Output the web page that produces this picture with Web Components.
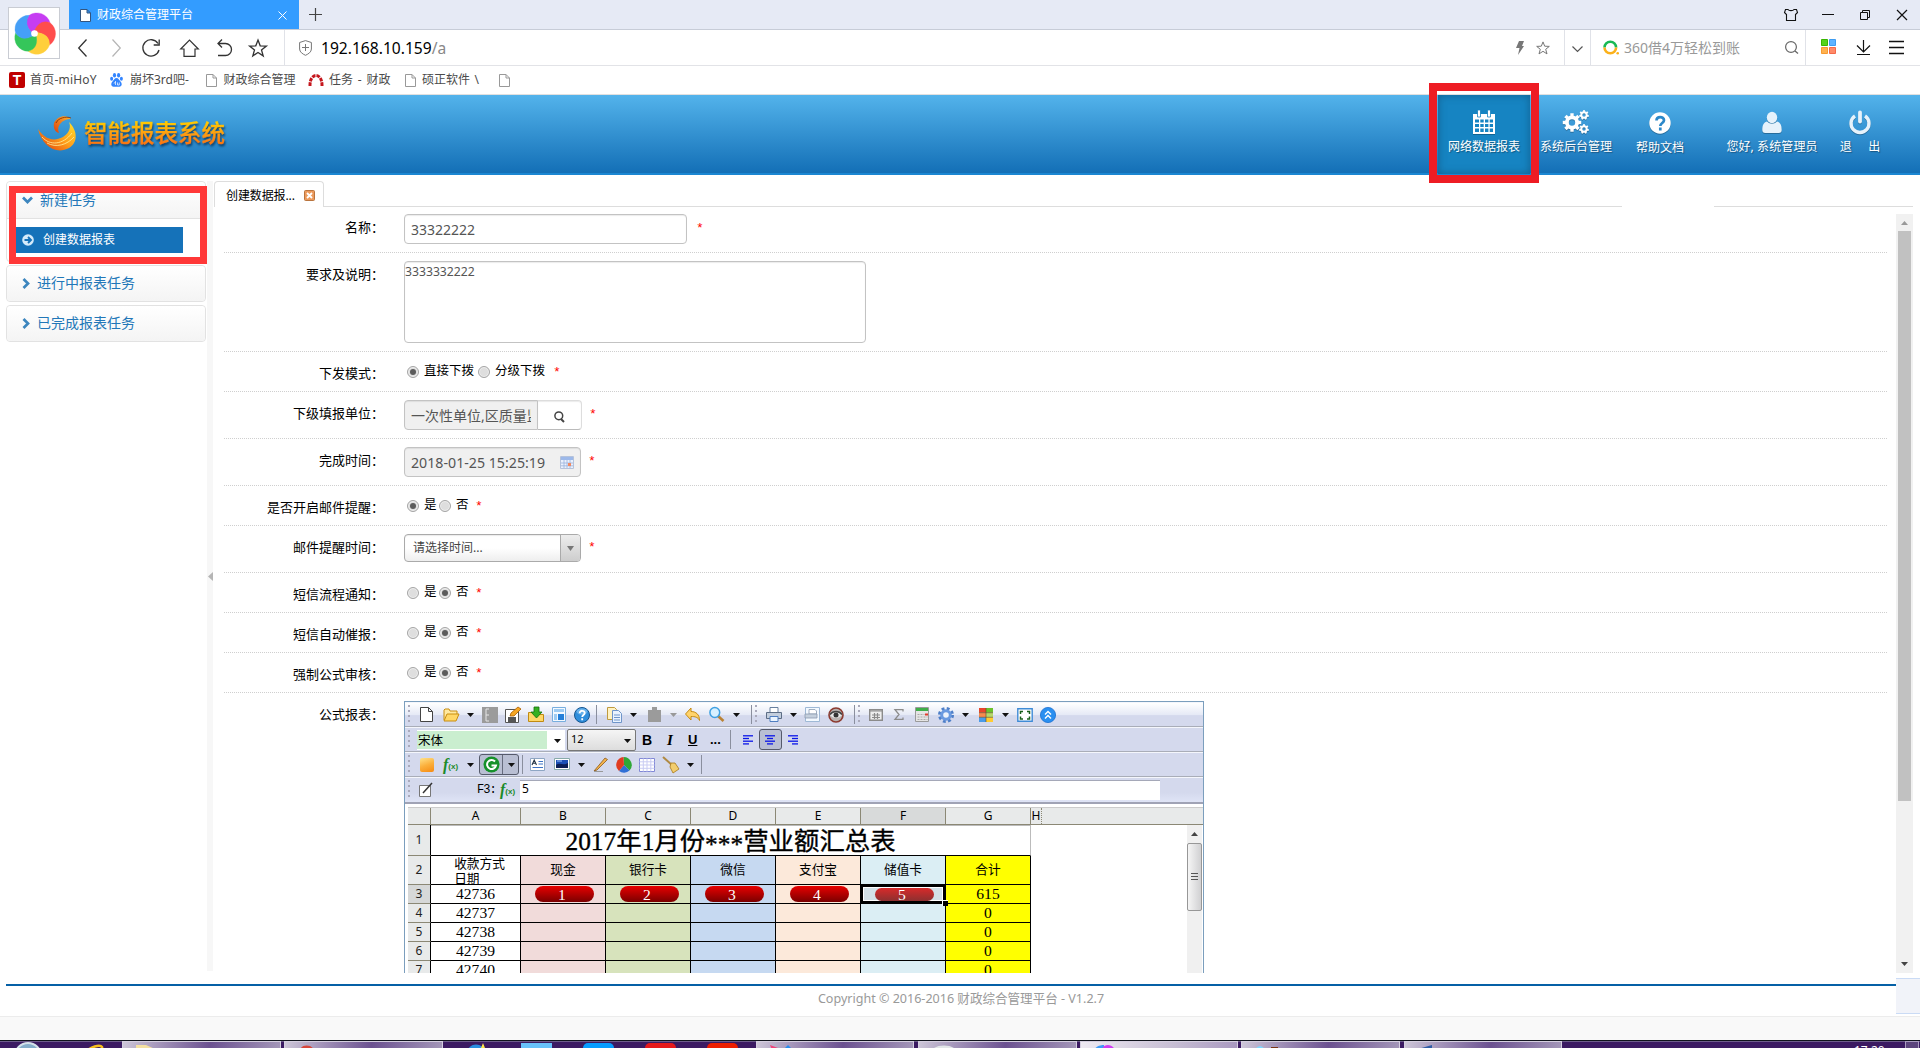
<!DOCTYPE html>
<html lang="zh-CN">
<head>
<meta charset="utf-8">
<title>财政综合管理平台</title>
<style>
html,body{margin:0;padding:0;background:#fff}
body{width:1920px;height:1048px;overflow:hidden;font-family:"Noto Sans","Noto Sans CJK SC",sans-serif;font-size:12px;line-height:16px;color:#333}
</style>
</head>
<body>
<report-app></report-app>
<script>
/* Lays items out in a flex row; x is the left edge of each item, y nudges it vertically. */
function place(origin, items) {
  let end = origin;
  return items.map(([x, w, html, y = 0, cls = '']) => {
    const m = x - end; end = x + w;
    return `<span class="it ${cls}" style="margin-left:${m}px;width:${w}px;${y ? `margin-top:${y * 2}px` : ''}">${html}</span>`;
  }).join('');
}
const BASE = `*{box-sizing:border-box}.it{flex:none;display:flex;align-items:center;white-space:nowrap}svg{display:block;flex:none;overflow:visible}.row{display:flex;align-items:center}`;
const svg = (w, h, body, a = '') => `<svg width="${w}" height="${h}" viewBox="0 0 ${w} ${h}" fill="none" ${a}>${body}</svg>`;
function define(name, html) {
  customElements.define(name, class extends HTMLElement {
    constructor() {
      super();
      this.attachShadow({ mode: 'open' }).innerHTML = typeof html === 'function' ? html(this) : html;
    }
  });
}
const doc = (c, f = '#fff') => svg(11, 13, `<path d="M.5.5h6.5l3.5 3.5v8.500H.5zM7 .5V4h3.500" stroke="${c}" fill="${f}"/>`);
const caret = (c = '#111') => svg(7, 4, `<path d="M0 0h7L3.500 4z" fill="${c}"/>`);
const swirl = (s) => {
  const cols = ['#c63df2', '#ff4d4d', '#ffcf3b', '#35c65a', '#459ff7'];
  return `<svg width="${s}" height="${s}" viewBox="-20 -20 40 40">` + cols.map((c, i) =>
    `<path d="M0 -3Q6 -14 16 -11A14 14 0 0 0 -5.500 -18.600Q-12.500 -10 -2.900 -.9Z" fill="${c}" stroke="${c}" stroke-width=".3" transform="rotate(${i * 72})"/>`).join('') +
    `<circle r="3.400" fill="#fff"/></svg>`;
};

/* ---------- browser window ---------- */
define('browser-chrome', () => `<style>${BASE}
:host{display:block;height:95px;position:relative}
.tabs{height:30px;background:#e6eaf5;border-bottom:1px solid #c7ccd7}
.tab{background:#339cff;height:29px;align-self:flex-start;color:#fff;padding-top:1px}
.addr{height:36px;border-bottom:1px solid #e2e3e7}
.marks{height:29px;border-bottom:1px solid #e0e0e0;color:#4b4b4b}
.v{height:35px;background:#e0e2e8}
.logo{position:absolute;left:8px;top:7px;width:52px;height:52px;background:#fff;border:1px solid #c9ccd3;display:flex;align-items:center;justify-content:center}
</style>
<div class="row tabs">${place(0, [
  [69, 230, `<span class="row" style="height:28px">${place(69, [[80, 11, doc('#33557f')], [97, 170, '<span style="font-size:12px">财政综合管理平台</span>'], [278, 9, svg(9, 9, '<path d="M.5.5l8 8M8.500.5l-8 8" stroke="#fff"/>')]])}</span>`, 0, 'tab'],
  [309, 13, svg(13, 13, '<path d="M6.500 0v13M0 6.500h13" stroke="#444" stroke-width="1.200"/>')],
  [1784, 14, svg(14, 12, '<path d="M4 .5C5 2 9 2 10 .5h2.500l1 3-2 2v6h-9v-6l-2-2 1-3z" stroke="#111" stroke-width="1.100"/>')],
  [1822, 12, svg(12, 2, '<path d="M0 .5h12" stroke="#111"/>')],
  [1860, 10, svg(10, 10, '<path d="M.5 2.500h7v7h-7zM2.500 2.500v-2h7v7h-2" stroke="#111"/>')],
  [1897, 10, svg(10, 10, '<path d="M0 0l10 10M10 0L0 10" stroke="#111" stroke-width="1.200"/>')]
])}</div>
<div class="row addr">${place(0, [
  [78, 9, svg(9, 18, '<path d="M8.500.5L.7 9l7.800 8.500" stroke="#333" stroke-width="1.300"/>')],
  [112, 9, svg(9, 18, '<path d="M.5.5L8.300 9 .5 17.500" stroke="#b5b5b5" stroke-width="1.200"/>')],
  [142, 18, svg(18, 18, '<path d="M16 4.500A8.200 8.200 0 1 0 17 11M17.200.5v5.500h-5.500" stroke="#333" stroke-width="1.300"/>')],
  [180, 19, svg(19, 18, '<path d="M.7 10L9.500 1l8.800 9H15v7.300H4V10z" stroke="#333" stroke-width="1.200"/>')],
  [217, 15, svg(15, 17, '<path d="M5 .5L1 4.500l4 4M1 4.500h7.500a6 6 0 0 1 0 12H1" stroke="#333" stroke-width="1.300"/>')],
  [249, 18, svg(18, 18, '<path d="M9 1l2.200 5.800 6.200.3-4.900 3.800 1.700 6L9 13.500l-5.200 3.400 1.700-6L.6 7.100l6.200-.3z" stroke="#333" stroke-width="1.300"/>')],
  [284, 1, '', 0, 'v'],
  [299, 13, svg(13, 16, '<path d="M6.500.6L12.400 2.500v6.500c0 3-3 5-5.900 6.300C3.600 14 .6 12 .6 9V2.500zM6.500 4v7M3 7.500h7" stroke="#777"/>')],
  [321, 135, '<span style="font-size:15.600px;color:#000">192.168.10.159<span style="color:#888">/a</span></span>'],
  [1516, 8, svg(8, 14, '<path d="M3 0h5L6 5h2L2 14l1.500-7H0z" fill="#777"/>')],
  [1536, 14, svg(14, 14, '<path d="M7 .9l1.700 4.300 4.600.2-3.600 2.900 1.300 4.600L7 10.300l-4 2.600 1.300-4.600L.7 5.400l4.600-.2z" stroke="#777"/>')],
  [1564, 1, '', 0, 'v'],
  [1572, 11, svg(11, 6, '<path d="M.5.5l5 5 5-5" stroke="#555" stroke-width="1.200"/>', 'style="margin-top:2px"')],
  [1590, 1, '', 0, 'v'],
  [1603, 16, svg(16, 15, '<path d="M1.500 7.500a5.800 5.800 0 0 1 11.600 0" stroke="#19b955" stroke-width="2.600"/><path d="M1.500 7.500a5.800 5.800 0 0 0 11.600 0" stroke="#fbb11b" stroke-width="2.600"/><circle cx="14.700" cy="13.200" r="1.300" fill="#fbb11b"/>')],
  [1624, 130, '<span style="font-size:14px;color:#999">360借4万轻松到账</span>'],
  [1785, 14, svg(14, 13, '<circle cx="6" cy="6" r="5.400" stroke="#666" stroke-width="1.200"/><path d="M10 10l3 2.500" stroke="#666" stroke-width="1.300"/>')],
  [1805, 1, '', 0, 'v'],
  [1821, 15, svg(15, 15, '<path d="M.5.5h6v6h-6z" fill="#54d31a" stroke="#38b400"/><path d="M8.500.5h6v6h-6z" fill="#5eb3ff" stroke="#3e9cf0"/><path d="M.5 8.500h6v6h-6z" fill="#ffb14f" stroke="#f79a2f"/><path d="M8.500 8.500h6v6h-6z" fill="#ff8a68" stroke="#f4694a"/>'), -1],
  [1856, 15, svg(15, 15, '<path d="M7.500 0v12M1 5.500l6.500 6.500L14 5.500M1 14.500h13" stroke="#111" stroke-width="1.200"/>')],
  [1889, 15, svg(15, 13, '<path d="M0 .5h15M0 6.500h15M0 12.500h15" stroke="#111" stroke-width="1.300"/>')]
])}</div>
<div class="row marks">${place(0, [
  [9, 16, '<b style="width:16px;height:16px;background:#c00000;border-radius:2px;color:#fff;font:bold 14px/16px Liberation Sans;text-align:center">T</b>'],
  [30, 75, '<span style="letter-spacing:.2px">首页-miHoY</span>'],
  [110, 13, svg(13, 14, '<g fill="#3385ff"><ellipse cx="4.500" cy="2.200" rx="1.600" ry="2.200"/><ellipse cx="8.600" cy="2.200" rx="1.600" ry="2.200"/><ellipse cx="1.600" cy="5.800" rx="1.500" ry="2"/><ellipse cx="11.400" cy="5.800" rx="1.500" ry="2"/><path d="M6.500 5c2 0 2.500 2 4 3.500 2 2 1.500 5-1 5.200-1.500 0-4.500 0-6 0C1 13.500.5 10.500 2.500 8.500 4 7 4.500 5 6.500 5z"/></g><path d="M5.500 8v4M4 10.500c0-1 1-1 1.500-1M7.500 9.500v2.500h1.800V9.500" stroke="#fff" stroke-width=".7"/>')],
  [130, 70, '崩坏3rd吧-'],
  [206, 11, doc('#999')],
  [223.5, 75, '财政综合管理'],
  [308, 16, svg(16, 12, '<path d="M2 12C1.500 -2 14.500 -2 14 12" stroke="#c5161d" stroke-width="3" stroke-dasharray="3.600 1"/>')],
  [329, 65, '<span style="word-spacing:1.700px">任务 - 财政</span>'],
  [405, 11, doc('#999')],
  [422, 65, '<span style="word-spacing:1.500px">硕正软件 \\</span>'],
  [499, 11, doc('#999')]
])}</div>
<div class="logo">${swirl(39)}</div>`);

/* ---------- application header ---------- */
const gear = (cx, cy, r, h, n) => {
  let t = '';
  for (let i = 0; i < n; i++) t += `<rect x="${-r * .24}" y="${-r * 1.32}" width="${r * .48}" height="${r * .6}" transform="translate(${cx} ${cy}) rotate(${i * 360 / n})" fill="#fff"/>`;
  return `${t}<circle cx="${cx}" cy="${cy}" r="${(r + h) / 2}" stroke="#fff" stroke-width="${r - h}"/>`;
};
define('nav-tile', el => `<style>${BASE}
:host{display:flex;flex-direction:column;align-items:center;justify-content:flex-end;flex:none;height:79px;padding-bottom:19px;color:#fff;text-shadow:1px 1px 1px rgba(0,0,0,.35)}
:host([active]){background:#1684c2;box-shadow:inset 0 0 8px #12608f}
.i{height:24px;display:flex;align-items:center;margin-bottom:5px;filter:drop-shadow(0 1px 0 rgba(0,0,0,.25))}
.t{white-space:pre;line-height:16px;margin-bottom:0}
</style><div class="i"><slot name="icon"></slot></div><div class="t"><slot></slot></div>`);
define('app-header', `<style>${BASE}
:host{display:flex;height:80px;background:linear-gradient(#53b3eb,#1470b7 77px,#1470b7 78px,#1b87d2 78px)}
.brand{display:flex;align-items:center;padding:0 0 5px 38px}
.name{font:500 23.500px/30px "Noto Sans CJK SC",sans-serif;margin-left:8px;margin-top:-1px;background:linear-gradient(#ffcb00 5px,#ffa010 16px,#fb7410 27px);-webkit-background-clip:text;color:transparent;filter:drop-shadow(1px 2px 1px rgba(0,30,60,.7));-webkit-text-stroke:.4px transparent}
.nav{display:flex;margin-left:auto}
</style>
<div class="brand">${svg(38, 36, '<defs><linearGradient id="a" x1="0" y1="1" x2="1" y2="0"><stop stop-color="#d9350b"/><stop offset=".5" stop-color="#ff9c1a"/><stop offset="1" stop-color="#ffe52e"/></linearGradient><linearGradient id="b" x1="0" y1="1" x2="1" y2="0"><stop stop-color="#e0400c"/><stop offset="1" stop-color="#ffb52e"/></linearGradient></defs><path d="M0 14C5 22 14 28 25 22C32 18 33 11 31 7C40 16 40 28 31 33C18 40 4 31 0 14z" fill="url(#a)"/><path d="M4 22C12 31 25 30 34 18M9 28C18 33 29 30 36 22" stroke="#fff3a0" stroke-width=".8"/><path d="M33 4C28-1 19 1 16 8C15 13 17 17 21 18C18 11 24 4 33 4z" fill="url(#b)"/><path d="M18 8C20 3 28 1 33 3" stroke="#7a2c08" stroke-width=".8"/>')}<span class="name">智能报表系统</span></div>
<div class="nav">
<nav-tile active style="width:92px">${svg(24, 25, '<path d="M1 4h22v20H1z" fill="#fff"/><path d="M5.500 0h3v7h-3zM15.500 0h3v7h-3z" fill="#fff" stroke="#1684c2" stroke-width=".8"/><path d="M3 9.500h4v3H3zM8.300 9.500h3.400v3H8.300zM13 9.500h3.400v3H13zM17.700 9.500H21v3h-3.300zM3 14h4v3H3zM8.300 14h3.400v3H8.300zM13 14h3.400v3H13zM17.700 14H21v3h-3.300zM3 18.500h4v3.500H3zM8.300 18.500h3.400v3.500H8.300zM13 18.500h3.400v3.500H13zM17.700 18.500H21v3.500h-3.300z" fill="#1684c2"/>', 'slot="icon"')}网络数据报表</nav-tile>
<nav-tile style="width:72px;margin-left:10px">${svg(27, 24, gear(9, 12.5, 7, 3.2, 8) + gear(21, 5, 3.7, 1.7, 7) + gear(21, 19, 3.7, 1.7, 7), 'slot="icon"')}系统后台管理</nav-tile>
<nav-tile style="width:48px;margin-left:24px;padding-bottom:18px">${svg(22, 22, '<circle cx="11" cy="11" r="10.700" fill="#fff"/><path d="M7.500 8.500C7.500 3.800 15 4 15 8.300C15 11 11.300 11 11.300 14M11.300 15.500v3" stroke="#2b88c9" stroke-width="2.700"/>', 'slot="icon"')}帮助文档</nav-tile>
<nav-tile style="width:92px;margin-left:42px">${svg(20, 21, '<ellipse cx="10" cy="5.500" rx="5.200" ry="5.700" fill="#e6f2fb"/><path d="M5 9.500c3 3 7 3 10 0 4 1 4.700 5 4.700 8.500 0 2-1 3-3 3H3.300c-2 0-3-1-3-3C.3 14.500 1 10.500 5 9.500z" fill="#e6f2fb"/>', 'slot="icon"')}<span style="letter-spacing:.1px">您好, 系统管理员</span></nav-tile>
<nav-tile style="width:44px;margin-left:20px;margin-right:38px">${svg(22, 23, '<path d="M6 5a9 9 0 1 0 10 0" stroke="#e6f2fb" stroke-width="3.400"/><path d="M11 1.500v9" stroke="#e6f2fb" stroke-width="3.800" stroke-linecap="round"/>', 'slot="icon"')}<span style="word-spacing:1px">退    出</span></nav-tile>
</div>`);

/* ---------- left menu ---------- */
define('menu-group', el => `<style>${BASE}
:host{display:block;width:200px;border:1px solid #e2e2e2;border-radius:4px;background:#fff}
.h{height:${el.hasAttribute('open') ? 37 : 35}px;display:flex;align-items:center;background:linear-gradient(#fff,#f4f4f4);border-radius:4px;color:#2277b8;font-size:14px;padding-left:15px}
:host([open]) .h{border-bottom:1px solid #e2e2e2;border-radius:4px 4px 0 0}
.h span{margin-left:7px;white-space:nowrap;margin-top:-1px}
</style><div class="h">${el.hasAttribute('open')
  ? svg(11, 8, '<path d="M1 1.500l4.500 4.500L10 1.500" stroke="#3d86be" stroke-width="2.700"/>')
  : svg(8, 11, '<path d="M1.500 1L6 5.500 1.500 10" stroke="#3d86be" stroke-width="2.700"/>')}<span>${el.getAttribute('label')}</span></div><slot></slot>`);
define('side-menu', `<style>${BASE}
:host{display:block;width:207px;padding:6px 0 0 6px;flex:none}
menu-group{margin-bottom:3px}
.cur{margin:8px 0 8px 9px;width:167px;height:26px;background:#1572b9;color:#fff;display:flex;align-items:center;padding:0 0 0 6px}
.cur span{margin-left:9px}
</style>
<menu-group label="新建任务" open><div class="cur">${svg(12, 12, '<circle cx="6" cy="6" r="5.800" fill="#d5ebfa"/><path d="M2.500 6h6M6 3l3 3-3 3" stroke="#1572b9" stroke-width="1.900"/>')}<span>创建数据报表</span></div></menu-group>
<menu-group label="进行中报表任务"></menu-group>
<menu-group label="已完成报表任务"></menu-group>`);

/* ---------- form ---------- */
define('form-row', el => `<style>${BASE}
:host{display:flex;width:1663px;border-bottom:1px dotted #cfcfcf;color:#000;height:${el.getAttribute('h')}px}
:host([last]){border:0}
label{width:160px;flex:none;font:13px/18px "Noto Sans CJK SC",sans-serif;text-align:right;padding-top:${el.getAttribute('ly')}px;white-space:nowrap}
.c{margin-left:20px;display:flex;align-items:flex-start;padding-top:${el.getAttribute('cy') || 9}px}
</style><label>${el.getAttribute('label')}：</label><div class="c"><slot></slot></div>`);
define('req-star', `<style>:host{display:block;color:#f00;font:13px/14px "Liberation Mono",monospace;flex:none}</style><span>*</span>`);
define('text-box', `<style>${BASE}
:host{display:flex;align-items:center;border:1px solid #c3c3c3;border-radius:4px;box-shadow:inset 0 1px 1px rgba(0,0,0,.08);color:#555;font-size:14px;flex:none;overflow:hidden;background:#fff;padding:1px 6px 0;white-space:nowrap}
:host([readonly]){background:#f0f0f0}
</style><slot></slot>`);
define('radio-choice', `<style>${BASE}
:host{display:flex;flex:none;font:12.500px/16px "Noto Sans CJK SC",sans-serif;white-space:nowrap}
i{width:12px;height:12px;border:1px solid #a6a6a6;border-radius:50%;background:#dedede;box-shadow:inset 0 0 0 1px #efefef;margin-top:4px;display:flex;align-items:center;justify-content:center}
:host([on]) i::after{content:"";width:6px;height:6px;border-radius:50%;background:#5c5c5c}
span{margin-left:5px}
</style><i></i><span><slot></slot></span>`);
const yesNo = (label, yes) => `<form-row label="${label}" h="40" ly="12" cy="10"><radio-choice ${yes ? 'on' : ''} style="width:32px;margin-left:3px">是</radio-choice><radio-choice ${yes ? '' : 'on'} style="width:36px">否</radio-choice><req-star style="margin-top:4px"></req-star></form-row>`;

define('report-form', `<style>${BASE}
:host{display:block;padding-left:11px;height:767px;overflow:hidden;flex:none;width:1683px}
</style>
<form-row label="名称" h="47" ly="12" cy="8"><text-box style="width:283px;height:30px">33322222</text-box><req-star style="margin:8px 0 0 9px"></req-star></form-row>
<form-row label="要求及说明" h="99" ly="12" cy="8"><text-box style="width:462px;height:82px;align-items:flex-start;padding:2px 0;font-size:12.200px">3333332222</text-box></form-row>
<form-row label="下发模式" h="40" ly="12" cy="10"><radio-choice on style="width:71px;margin-left:3px">直接下拨</radio-choice><radio-choice style="width:75px">分级下拨</radio-choice><req-star style="margin-top:4px"></req-star></form-row>
<form-row label="下级填报单位" h="47" ly="12" cy="8"><text-box readonly style="width:134px;height:30px;border-radius:4px 0 0 4px"><span style="width:121px;overflow:hidden;font-size:14px">一次性单位,区质量监</span></text-box><text-box style="width:44px;height:30px;border-radius:0 4px 4px 0;border-left:0;border-color:#ddd #ddd #bbb;padding-left:16px;padding-top:3px">${svg(11, 12, '<circle cx="4.800" cy="4.800" r="3.900" stroke="#444" stroke-width="1.500"/><path d="M7 8l3 3" stroke="#444" stroke-width="2"/>')}</text-box><req-star style="margin:8px 0 0 7px"></req-star></form-row>
<form-row label="完成时间" h="47" ly="12" cy="8"><text-box readonly style="width:177px;height:30px;"><span style="width:150px;font-size:14.200px">2018-01-25 15:25:19</span>${svg(14, 13, '<path d="M.5.5h13v12H.5z" fill="#eaf1fd" stroke="#b6c3da"/><path d="M1 1h12v3H1z" fill="#9db9ea"/><path d="M1 7h12M1 9.800h12M4 4v8M7 4v8M10 4v8" stroke="#9ab3dc" stroke-width=".8"/><path d="M8 7h3v3H8z" fill="#f08a63"/>')}</text-box><req-star style="margin:8px 0 0 7px"></req-star></form-row>
${yesNo('是否开启邮件提醒', true)}
<form-row label="邮件提醒时间" h="47" ly="12" cy="8"><text-box style="width:177px;height:28px;background:linear-gradient(#fff 50%,#eee);border-color:#aaa;padding:0 0 0 8px;font-size:12px;color:#444"><span style="width:148px">请选择时间...</span><span style="height:28px;width:20px;border-left:1px solid #aaa;background:linear-gradient(#eee,#ccc);display:flex;align-items:center;justify-content:center">${svg(7, 5, '<path d="M0 0h7L3.500 5z" fill="#777"/>')}</span></text-box><req-star style="margin:7px 0 0 7px"></req-star></form-row>
${yesNo('短信流程通知', false)}${yesNo('短信自动催报', false)}${yesNo('强制公式审核', false)}
<form-row label="公式报表" h="290" ly="12" cy="8" last><sheet-editor></sheet-editor></form-row>`);

/* ---------- spreadsheet ---------- */
const S = {
  fx: '<span style="color:#1b8a2a;font:italic bold 16px/16px Liberation Serif">f</span><span style="color:#1b8a2a;font:bold 8px/10px Liberation Sans;margin-top:4px">(x)</span>',
  sep: '<span style="width:1px;height:19px;background:#8a8f9e"></span>',
  grip: '<span style="width:2px;height:20px;background:repeating-linear-gradient(#aab 0 2px,transparent 2px 5px)"></span>',
  lines: (a) => svg(11, 10, [0, 1, 2, 3].map(i => { const w = i % 2 ? 6 : 10; const x = a === 0 ? 0 : a === 1 ? (10 - w) / 2 : 10 - w; return `<path d="M${x} ${.8 + i * 2.7}h${w}" stroke="#0b16e8" stroke-width="1.300"/>`; }).join(''))
};
const bar1 = place(405, [
  [408, 3, S.grip],
  [420, 13, svg(13, 15, '<path d="M.5.5h8l4 4v10H.5zM8.500.5v4h4" stroke="#444" fill="#fff"/>')],
  [443, 17, svg(17, 14, '<path d="M1 12V2l1-1h4l1 2h7v3" fill="#ffe9a0" stroke="#c98e10"/><path d="M1 13l3-7h12l-3 7z" fill="#ffd766" stroke="#c98e10"/>')],
  [467, 7, caret()],
  [482, 16, svg(16, 16, '<path d="M0 0h16v16H0z" fill="#9b9b9b"/><path d="M4 2v12M4 2h3M4 8h3M4 14h3" stroke="#e5e5e5"/>')],
  [505, 16, svg(16, 16, '<path d="M.5 2.500h13v13H.5z" fill="#fff" stroke="#555"/><path d="M3 10h8v5H3z" fill="#555"/><path d="M5 9l1-3 7-6 3 2-7 7z" fill="#f5a623" stroke="#a95d00" stroke-width=".8"/>')],
  [528, 16, svg(16, 15, '<path d="M.5 5.500h4l1 2h10v7H.5z" fill="#ffd869" stroke="#c08a12"/><path d="M6 0h5v5h3L8.500 11 3 5h3z" fill="#35b022" stroke="#16720d" stroke-width=".8"/>')],
  [552, 14, svg(14, 15, '<path d="M.5.5h13v14H.5z" fill="#f3f9ff" stroke="#78aede"/><path d="M2 2h10v3H2zM2 7h3v6H2z" fill="#9dcbf3"/><path d="M6 7h6v6H6z" fill="#247fd9"/>')],
  [574, 16, svg(16, 16, '<circle cx="8" cy="8" r="7.500" fill="#2f8edc" stroke="#14558f"/><ellipse cx="8" cy="4.500" rx="5.500" ry="3.200" fill="#8cc7f4" opacity=".6"/><path d="M5.700 6.200c0-3.400 5-3 5-.2C10.700 8 8.200 8 8.200 10M8.200 11.300v2" stroke="#fff" stroke-width="1.800"/>')],
  [596, 1, S.sep],
  [607, 15, svg(15, 16, '<path d="M.5.500h7l2 2v10h-9z" fill="#fff2c2" stroke="#bf9a3e"/><path d="M5.500 3.500h6l3 3v9h-9z" fill="#eaf3ff" stroke="#6f95c9"/><path d="M7 8h6M7 10.500h6M7 13h6" stroke="#6f95c9"/>')],
  [630, 7, caret()],
  [648, 14, svg(14, 15, '<path d="M0 3h4V0h5v3h4v12H0z" fill="#9b9b9b"/>')],
  [670, 7, caret('#999')],
  [685, 15, svg(15, 13, '<path d="M6 0v3.500c5 0 8.500 3 8.500 9C13 9 10 8.500 6 8.500V12L.5 6z" fill="#ffd36b" stroke="#c58a12"/>')],
  [709, 16, svg(16, 15, '<path d="M9 9l5.500 5" stroke="#b98234" stroke-width="2.600"/><circle cx="5.800" cy="5.500" r="4.900" fill="#d8f1ff" stroke="#3fa0e2" stroke-width="1.500"/>')],
  [733, 7, caret()],
  [751, 2, S.sep],
  [755, 3, S.grip],
  [766, 16, svg(16, 15, '<path d="M4 .5h8v6H4z" fill="#fff" stroke="#68809f"/><path d="M.5 5.500h15v6H.5z" fill="#c3cedd" stroke="#5c6d85"/><path d="M4 9.500h8v5H4z" fill="#eaf4ff" stroke="#4f7ec0"/>')],
  [790, 7, caret()],
  [805, 15, svg(15, 15, '<path d="M.5.5h14v14H.5z" fill="#f3f9ff" stroke="#9fb9d6"/><path d="M4 2.500h6l1.500 1.500v3H4z" fill="#fff" stroke="#8a9bb0" stroke-width=".8"/><path d="M0 7h12v4H0z" fill="#c5d0dd" stroke="#8a9bb0" stroke-width=".8"/>')],
  [828, 16, svg(16, 16, '<circle cx="8" cy="8" r="7" fill="#b9b2b0" stroke="#8c3a30" stroke-width="1.600"/><path d="M2 8c3-4 9-4 12 0-3 4-9 4-12 0z" fill="#e8e8e8"/><path d="M2 7.500c3-4 9-4 12 0" stroke="#444" stroke-width="1.500"/><circle cx="8" cy="8" r="2.500" fill="#333"/>')],
  [854, 2, S.sep],
  [858, 3, S.grip],
  [869, 14, svg(14, 12, '<path d="M.7.7h12.600v10.600H.7z" fill="#eee" stroke="#8b8b8b" stroke-width="1.400"/><path d="M1 2h12M3 6h8M3 8.500h8M5.500 4v6M8.500 4v6" stroke="#8b8b8b" stroke-width="1.200"/>')],
  [894, 10, svg(10, 11, '<path d="M9 2.500V.7H1l4 4.800-4 4.800h8V8.500" stroke="#8b8b8b" stroke-width="1.300"/>')],
  [915, 14, svg(14, 15, '<path d="M.5.5h13v14H.5z" fill="#e5e5e5" stroke="#9a9a9a"/><path d="M1 1h12v3H1z" fill="#3fae49"/><path d="M2.500 7.500h7M2.500 10h10M2.500 12.500h10" stroke="#aaa" stroke-dasharray="2 1"/><path d="M10 6.500h3v2h-3z" fill="#e23b2b"/>')],
  [938, 16, svg(16, 16, '<circle cx="8" cy="8" r="6.500" stroke="#4e7fc8" stroke-width="3" stroke-dasharray="2.800 2.300"/><circle cx="8" cy="8" r="4.300" fill="#eef3fb" stroke="#6b9ae0" stroke-width="3"/>')],
  [962, 7, caret()],
  [979, 14, svg(14, 14, '<path d="M0 0h7v4.700H0z" fill="#e8442b"/><path d="M7 0h7v4.700H7z" fill="#6cc12d"/><path d="M0 4.700h7v4.600H0z" fill="#f68a4f"/><path d="M7 4.700h7v4.600H7z" fill="#b5d86a"/><path d="M0 9.300h7V14H0z" fill="#4a9be8"/><path d="M7 9.300h7V14H7z" fill="#ffcc33"/><path d="M7 0v14M0 4.700h14M0 9.300h14" stroke="#5b4a28" stroke-width=".6"/>')],
  [1002, 7, caret()],
  [1017, 16, svg(16, 14, '<path d="M.8.800h14.400v12.400H.8z" fill="#fff" stroke="#3f8bd6" stroke-width="1.400"/><path d="M3.500 6V3.500H6M10 3.500h2.500V6M12.500 8.500V11H10M6 11H3.500V8.500" stroke="#185f1a" stroke-width="1.500"/>')],
  [1040, 16, svg(16, 16, '<circle cx="8" cy="8" r="7.600" fill="#2a8ff0" stroke="#1b6fd0" stroke-width=".8"/><path d="M5 7.500l3-3 3 3M5 11.500l3-3 3 3" stroke="#fff" stroke-width="1.400"/>')]
]);
const bar2 = place(405, [
  [408, 3, S.grip],
  [417, 148, `<span class="font"><span class="fn">宋体</span>${caret()}</span>`],
  [567, 69, `<span class="size"><span>12</span>${caret()}</span>`],
  [642, 12, '<b style="font:bold 14px/16px Liberation Sans">B</b>'],
  [667, 12, '<b style="font:italic bold 15px/16px Liberation Serif">I</b>'],
  [688, 12, '<b style="font:bold 13px/16px Liberation Sans;text-decoration:underline">U</b>'],
  [710, 14, '<b style="font:bold 13px/14px Liberation Sans">...</b>'],
  [730, 1, S.sep],
  [743, 11, S.lines(0)],
  [759, 23, `<span class="press" style="width:23px;height:21px">${S.lines(1)}</span>`],
  [788, 11, S.lines(2)]
]);
const bar3 = place(405, [
  [408, 3, S.grip],
  [420, 14, '<span style="width:14px;height:14px;border-radius:2px;background:linear-gradient(160deg,#ffe28a,#fbb03c 50%,#f68a12)"></span>'],
  [443, 17, S.fx],
  [467, 7, caret()],
  [479, 40, `<span class="press" style="width:40px;height:21px;justify-content:flex-start;padding-left:3px">${svg(17, 17, '<circle cx="8.500" cy="8.500" r="8" fill="#16912b"/><path d="M12 5.500A4.500 4.500 0 1 0 13 9.500H8.500" stroke="#fff" stroke-width="2"/>')}<span style="width:1px;height:19px;background:#666b7d;margin:0 5px 0 2px"></span>${caret()}</span>`],
  [522, 1, S.sep],
  [530, 15, svg(15, 13, '<path d="M.5.5h14v12H.5z" fill="#fff" stroke="#8ea6c4"/><path d="M2 7l2.200-5L6.500 7M3 5.300h2.600" stroke="#234" stroke-width="1.100"/><path d="M8.500 3.500h4.500M8.500 6h4.500M2.500 9.500H13" stroke="#3d73c5"/>')],
  [554, 16, svg(16, 13, '<path d="M.5.5h15v11H.5z" fill="#fff" stroke="#8aa"/><path d="M2 2h12v8H2z" fill="#1b4fb5"/><path d="M2 7c4-3 7 1 12-2v5H2z" fill="#0a1e55"/><path d="M3 3h5" stroke="#9cc5ff"/>')],
  [578, 7, caret()],
  [593, 16, svg(16, 15, '<path d="M1 14L12 1l2.500 1.500L4 13z" fill="#f3b24d" stroke="#8c5a1b" stroke-width=".8"/><path d="M1 14.500h9" stroke="#999"/>')],
  [616, 16, svg(16, 16, '<path d="M8 8L7.500 0A8 8 0 0 1 13.500 13.500z" fill="#2fa836"/><path d="M8 8L13.500 13.500A8 8 0 0 1 3 14z" fill="#2f6fd6"/><path d="M8 8L3 14A8 8 0 0 1 7.500 0z" fill="#e03c22"/>')],
  [639, 16, svg(16, 14, '<path d="M.5.5h15v13H.5z" fill="#fff" stroke="#8188d6"/><path d="M.5 3.800h15M.5 7h15M.5 10.300h15M4.300.5v13M8 .5v13M11.800.5v13" stroke="#c9ccf3"/>')],
  [663, 17, svg(17, 16, '<path d="M0 0l9 8" stroke="#b08a42" stroke-width="2"/><path d="M8 6l4 0 4 6-6 4-3-6z" fill="#f2cd6e" stroke="#a87818" stroke-width=".8"/>')],
  [687, 7, caret()],
  [701, 1, S.sep]
]);
const bar4 = place(405, [
  [408, 3, S.grip],
  [419, 14, svg(14, 14, '<path d="M.5 2.500h11v11H.5z" fill="#fff" stroke="#777"/><path d="M4 10l9-10" stroke="#333" stroke-width="1.500"/>')],
  [477, 20, '<span style="font:12px/14px Liberation Mono;color:#000;letter-spacing:-1px">F3:</span>'],
  [500, 17, S.fx],
  [520, 640, '<span class="fin">5</span>']
]);
const COLORS = ['#f1dbda', '#d7e3bc', '#c6d9f1', '#fce9da', '#dbeef4', '#ffff00'];
const rowHtml = (n, h, first, cells) => `<div class="r" style="height:${h}px"><span class="rh${n === 3 ? ' cur' : ''}">${n}</span><span class="c a">${first}</span>${cells.map((t, i) => `<span class="c${n === 3 && i === 4 ? ' sel' : ''}" style="background-color:${n === 3 && i === 4 ? '#d3e1e8' : COLORS[i]}">${t}</span>`).join('')}</div>`;
define('sheet-editor', `<style>${BASE}
:host{display:block;width:800px;height:290px;border:1px solid #7b9ebd;flex:none;color:#000;background:#fff}
.bar{display:flex;align-items:center;height:25px;background:#d4d9ed;border-bottom:1px solid #a9adb8;border-top:1px solid #f4f6fc}
.bar.one{background:linear-gradient(#fff,#e6eaf6 50%,#d4d9ed 55%)}
.bar.four{height:27px;border-bottom:2px solid #a0a3b5;background:linear-gradient(#d4d9ed 60%,#dfe4f6)}
.font{display:flex;width:148px;height:20px;background:#fff;align-items:center}
.fn{width:130px;height:18px;background:#caeecf;font:12.500px/17px "Noto Sans CJK SC";padding-left:1px;margin-right:7px}
.size{display:flex;width:69px;height:22px;border:1px solid #777;border-radius:2px;background:linear-gradient(#f5f5f5,#ddd);align-items:center;padding-left:3px;font:11px/14px "Noto Sans"}
.size span{width:53px;margin-top:-2px}
.size svg,.font svg{margin-top:2px}
.press{display:flex;align-items:center;justify-content:center;border:1px solid #555a6b;border-radius:3px;background:#b9bfd3}
.fin{background:#fff;width:640px;height:20px;border-top:1px solid #a5a8b8;padding-left:2px;font:12px/16px "Noto Sans"}
.cols{display:flex;height:18px;margin:3px 0 0 3px;background:#e8eaea;border-bottom:1px solid #8b8875;border-top:1px solid #ccc;font:12px/16px "Noto Sans";text-align:center}
.cols span{flex:none;border-right:1px solid #8b8875;width:85px}
.area{display:flex;height:148px;overflow:hidden;padding-left:3px}
.grid{width:623px;flex:none}
.r{display:flex}
.rh{width:23px;flex:none;background:#e8eaea;border-right:1px solid #000;border-bottom:1px solid #8b8875;font:12px/1 "Noto Sans";display:flex;align-items:center;justify-content:center;color:#222}
.cur{background:#d6d8d8!important}
.c{width:85px;flex:none;border-right:1px solid #000;border-bottom:1px solid #000;display:flex;align-items:center;justify-content:center;font:15.600px/18px "Liberation Serif","Noto Sans CJK SC",serif;overflow:hidden;white-space:nowrap}
.a{width:90px}
.h{font:12.700px/17px "Noto Sans CJK SC",sans-serif;margin-top:-3px}
.p{width:59px;height:16px;border-radius:8px;background:linear-gradient(#e80000,#7a0000);color:#fff;text-align:center;line-height:17px;padding-right:4px;margin-left:2px}
.sel{position:relative;overflow:visible;box-shadow:inset 0 0 0 2px #000,inset 0 0 0 3px #fff}
.sel::after{content:"";position:absolute;right:-3px;bottom:-3px;width:5px;height:5px;background:#000;border:solid #fff;border-width:1px 0 0 1px}
.sel .p{background:linear-gradient(#d82a2a,#8c3030);height:13px;line-height:14px}
.title{width:600px;border-right:1px solid #bbb;border-bottom:1px solid #000;border-top:1px solid #bbb;font:25.400px/31px "Liberation Serif","Noto Sans CJK SC",serif;text-align:center;-webkit-text-stroke:.35px #000;white-space:nowrap}
.title i{font-style:normal;position:relative;top:3px}
.sb{margin-left:156px;width:15px;background:#f0f0f0;display:flex;flex-direction:column;align-items:center}
.th{width:15px;height:68px;margin-top:7px;border:1px solid #979797;border-radius:2px;background:linear-gradient(90deg,#f5f5f5,#d0d0d2);display:flex;align-items:center;justify-content:center}
</style>
<div class="bar one">${bar1}</div><div class="bar">${bar2}</div><div class="bar">${bar3}</div><div class="bar four">${bar4}</div>
<div class="cols"><span style="width:23px"></span><span style="width:90px">A</span><span>B</span><span>C</span><span>D</span><span>E</span><span style="background:#d8dada">F</span><span>G</span><span style="width:11px;border-right-style:dotted">H</span></div>
<div class="area"><div class="grid">
<div class="r" style="height:31px"><span class="rh">1</span><span class="title">2017年1月份<i>***</i>营业额汇总表</span></div>
${rowHtml(2, 29, '<span class="h" style="white-space:pre;margin-left:8px;line-height:15.500px;margin-top:0">收款方式\n日期</span>', ['现金', '银行卡', '微信', '支付宝', '储值卡', '合计'].map(t => `<span class="h">${t}</span>`))}
${rowHtml(3, 19, '42736', [1, 2, 3, 4, 5].map(n => `<span class="p">${n}</span>`).concat('615'))}
${[42737, 42738, 42739, 42740].map((v, i) => rowHtml(4 + i, 19, v, ['', '', '', '', '', '0'])).join('')}
</div><div class="sb">${svg(7, 4, '<path d="M0 4h7L3.500 0z" fill="#444"/>', 'style="margin-top:7px"')}<div class="th">${svg(7, 8, '<path d="M0 .5h7M0 3.500h7M0 6.500h7" stroke="#555"/>')}</div></div></div>`);

/* ---------- page body ---------- */
define('scroll-rail', `<style>${BASE}
:host{display:flex;flex-direction:column;align-items:center;width:17px;height:759px;background:#f1f1f1;flex:none;margin-top:8px}
.t{width:13px;height:570px;background:#c1c1c1;margin-top:6px}
</style>${svg(7, 4, '<path d="M0 4h7L3.500 0z" fill="#999"/>', 'style="margin-top:7px"')}<div class="t"></div>${svg(7, 4, '<path d="M0 0h7L3.500 4z" fill="#444"/>', 'style="margin-top:161px"')}`);
define('work-area', `<style>${BASE}
:host{display:block;flex:1}
.tabs{display:flex;height:32px;padding:6px 0 0 1px}
.tab{width:110px;border:1px solid #ddd;border-bottom:0;border-radius:4px 4px 0 0;display:flex;align-items:center;padding:2px 0 0 11px;color:#000;white-space:nowrap}
.tab span{width:78px;letter-spacing:-.1px;padding-top:1px}
.ln{border-bottom:1px solid #ddd;width:1298px;flex:none}
.main{display:flex;margin-top:-1px}
</style>
<div class="tabs"><div class="tab"><span>创建数据报...</span>${svg(11, 11, '<rect x=".5" y=".5" width="10" height="10" rx="1" fill="#ec9a5c" stroke="#b9743e"/><path d="M3 3l5 5M8 3L3 8" stroke="#fff" stroke-width="1.800"/>')}</div><div class="ln"></div><div class="ln" style="width:199px;margin-left:92px"></div></div>
<div class="main"><report-form></report-form><scroll-rail></scroll-rail></div>`);
define('split-bar', `<style>:host{display:flex;align-items:center;width:6px;height:790px;margin-top:6px;background:#f7f7f7;flex:none}svg{display:block}</style>${svg(6, 9, '<path d="M6 0v9L1 4.500z" fill="#b5b5b5"/>')}`);
define('app-footer', `<style>${BASE}
:host{display:block;height:62px}
.a{display:flex;height:38px;padding-left:6px}
.l{width:1890px;margin-top:6px;border-top:2px solid #0560a6;text-align:center;color:#999;font-size:12.550px;line-height:16px;padding:5px 0 0 20px}
.r{width:24px;height:36px;background:#f1f3f9;border:1px solid #cadbf5;border-width:1px 0;flex:none}
.g{height:24px;background:#f9f9f9;border-top:1px solid #ececec}
</style><div class="a"><div class="l">Copyright © 2016-2016 财政综合管理平台 - V1.2.7</div><div class="r"></div></div><div class="g"></div>`);
const win = (x, w, ic, active) => [x, w, `<span class="w${active ? ' on' : ''}" style="width:${w}px">${ic}</span>`];
define('task-bar', `<style>${BASE}
:host{display:flex;height:8px;overflow:hidden;background:linear-gradient(#10131c 1px,#6d5c8b 1px,#6d5c8b 2px,#3b1a62 2px);align-items:flex-start}
.it{align-items:flex-start;margin-top:1px}
.w{height:8px;border:1px solid #d5cfe0;border-bottom:0;background:linear-gradient(100deg,#cdc6d8,#6b5190 55%,#a396b8);padding:3px 0 0 13px}
.on{background:linear-gradient(100deg,#eeeaf2,#c6bdd3 60%,#a999c0)}
.d{height:5px;margin-top:2px;width:31px}
</style>${place(0, [
  [14, 28, '<span style="width:28px;height:28px;border-radius:50%;background:#86aecb;border:2px solid #d5e2ea;margin-top:1px"></span>'],
  [86, 18, svg(18, 8, '<path d="M0 8C4 3 14 0 16 3c1 2-2 3-5 5" stroke="#f7bf1d" stroke-width="2.500"/>', 'style="margin-top:3px"')],
  win(122, 159, svg(20, 6, '<path d="M0 0h10l9 4v2H0z" fill="#f4e0a2"/>')),
  win(284, 159, svg(18, 5, '<path d="M2 5C3-1 14-1 16 5z" fill="#d7463a"/>')),
  [468, 24, svg(24, 6, '<path d="M0 6c4-6 12-6 16 0" fill="#298fe0"/><path d="M8 5h5l2-5 2 5h4" fill="#ffe64a"/>', 'style="margin-top:2px"')],
  [521, 32, '<span class="d" style="background:#68c2fa"></span>'],
  [583, 32, '<span class="d" style="background:#069cff;border-radius:9px 9px 0 0"></span>'],
  [645, 32, '<span class="d" style="background:#e6191b;border-radius:9px 9px 0 0"></span>'],
  [707, 32, '<span class="d" style="background:#ec1e00;border-radius:9px 9px 0 0"></span>'],
  win(756, 158, svg(22, 5, '<path d="M0 0l8 3v2H2z" fill="#f0437b"/><path d="M14 4l4-4 4 4v1h-8z" fill="#268df0"/>')),
  win(918, 159, svg(24, 5, '<path d="M0 5C4-1 20-1 24 5z" fill="#e2e6e8"/>')),
  win(1080, 158, svg(24, 5, '<path d="M0 5C3 0 8 0 10 0v5z" fill="#3f9af7"/><path d="M8 5C9-2 19-1 21 5z" fill="#d13df2"/>'), true),
  win(1241, 159, svg(24, 5, '<path d="M0 5C2 0 8 0 10 5z" fill="#7fd8ff"/><path d="M16 2h7v3h-7z" fill="#7a3516"/>')),
  win(1404, 158, svg(20, 5, '<path d="M0 4L14 0v5H0z" fill="#2f5ca6"/>')),
  [1854, 30, '<span style="color:#fff;font:12px/14px Noto Sans;margin-top:3px">17:20</span>'],
  [1905, 14, '<span style="width:14px;height:8px;border:1px solid #a99cc0;background:#5c457d"></span>']
])}`);
define('mark-frame', `<style>:host{position:absolute;box-sizing:border-box;border-style:solid}</style>`);
define('report-app', `<style>
*{box-sizing:border-box;flex-shrink:0}
:host{display:flex;flex-direction:column;width:1920px;height:1048px;position:relative;background:#fff}
.body{display:flex;height:799px;align-items:flex-start}
</style>
<browser-chrome></browser-chrome><app-header></app-header>
<div class="body"><side-menu></side-menu><split-bar></split-bar><work-area></work-area></div>
<app-footer style="margin-top:4px"></app-footer><task-bar></task-bar>
<mark-frame style="left:9px;top:186px;width:198px;height:78px;border-width:7px;border-color:#ff3838"></mark-frame>
<mark-frame style="left:1429px;top:83px;width:110px;height:100px;border-width:8px;border-color:#ee1c24"></mark-frame>`);
</script>
</body>
</html>
